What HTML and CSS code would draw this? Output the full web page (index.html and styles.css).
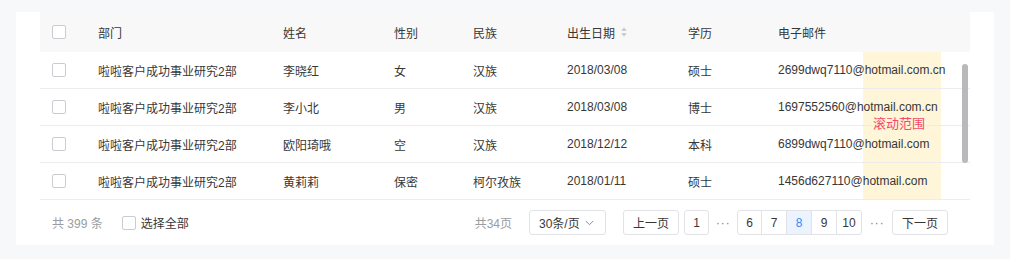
FILE: index.html
```html
<!DOCTYPE html>
<html lang="zh">
<head>
<meta charset="utf-8">
<link rel="stylesheet" href="styles.css">
</head>
<body>
<div class="card">
  <div class="table">
    <div class="row head">
      <div class="c c1"><span class="cb"></span></div>
      <div class="c">部门</div>
      <div class="c">姓名</div>
      <div class="c">性别</div>
      <div class="c">民族</div>
      <div class="c">出生日期<svg class="sort" width="6" height="10" viewBox="0 0 6 10"><path d="M3 0.5L5.8 3.8H0.2Z M3 9.5L5.8 6.2H0.2Z" fill="#c4c6cc"/></svg></div>
      <div class="c">学历</div>
      <div class="c">电子邮件</div>
    </div>
    <div class="body">
      <div class="hl"></div>
      <div class="note">滚动范围</div>
      <div class="scrollbar"></div>
      <div class="row">
        <div class="c c1"><span class="cb"></span></div>
        <div class="c">啦啦客户成功事业研究2部</div>
        <div class="c">李晓红</div>
        <div class="c">女</div>
        <div class="c">汉族</div>
        <div class="c">2018/03/08</div>
        <div class="c">硕士</div>
        <div class="c">2699dwq7110@hotmail.com.cn</div>
      </div>
      <div class="row">
        <div class="c c1"><span class="cb"></span></div>
        <div class="c">啦啦客户成功事业研究2部</div>
        <div class="c">李小北</div>
        <div class="c">男</div>
        <div class="c">汉族</div>
        <div class="c">2018/03/08</div>
        <div class="c">博士</div>
        <div class="c">1697552560@hotmail.com.cn</div>
      </div>
      <div class="row">
        <div class="c c1"><span class="cb"></span></div>
        <div class="c">啦啦客户成功事业研究2部</div>
        <div class="c">欧阳琦哦</div>
        <div class="c">空</div>
        <div class="c">汉族</div>
        <div class="c">2018/12/12</div>
        <div class="c">本科</div>
        <div class="c">6899dwq7110@hotmail.com</div>
      </div>
      <div class="row">
        <div class="c c1"><span class="cb"></span></div>
        <div class="c">啦啦客户成功事业研究2部</div>
        <div class="c">黄莉莉</div>
        <div class="c">保密</div>
        <div class="c">柯尔孜族</div>
        <div class="c">2018/01/11</div>
        <div class="c">硕士</div>
        <div class="c">1456d627110@hotmail.com</div>
      </div>
    </div>
    <div class="footer">
      <div class="left">
        <span class="total">共 399 条</span>
        <label class="selall"><span class="cb"></span>选择全部</label>
      </div>
      <div class="pager">
        <span class="pages">共34页</span>
        <span class="select">30条/页<svg width="9" height="6" viewBox="0 0 9 6"><path d="M0.8 1L4.5 4.7L8.2 1" fill="none" stroke="#8a8d93" stroke-width="1"/></svg></span>
        <span class="btn wide">上一页</span>
        <span class="btn">1</span>
        <span class="dots d1">···</span>
        <span class="group">
          <span class="gbtn">6</span><span class="gbtn">7</span><span class="gbtn active">8</span><span class="gbtn">9</span><span class="gbtn">10</span>
        </span>
        <span class="dots d2">···</span>
        <span class="btn wide">下一页</span>
      </div>
    </div>
  </div>
</div>
</body>
</html>
```
FILE: styles.css
```css
* { box-sizing: border-box; }
html, body { margin: 0; }
body {
  background: #f7f8fa;
  padding: 12px 16px 0 16px;
  font-family: "Liberation Sans", "Noto Sans CJK SC", sans-serif;
  font-size: 12px;
  color: #373737;
}
.card {
  width: 978px;
  height: 233px;
  background: #fff;
  padding: 0 24px;
}
.table { width: 930px; }
.row {
  display: grid;
  grid-template-columns: 58px 185px 111px 79px 94px 121px 90px 192px;
  height: 37px;
  border-bottom: 1px solid #ececef;
  align-items: center;
  position: relative;
}
.row.head {
  height: 40px;
  background: #f8f8f9;
  border-bottom: none;
}
.c { white-space: nowrap; display: flex; align-items: center; }
.c1 { padding-left: 12px; }
.cb {
  display: inline-block;
  width: 14px;
  height: 14px;
  border: 1px solid #c9ccd1;
  border-radius: 2px;
  background: #fff;
}
.sort { margin-left: 6px; }
.body { position: relative; }
.hl {
  position: absolute;
  left: 823px;
  top: 0;
  width: 78px;
  height: 148px;
  background: #fff5d9;
}
.note {
  position: absolute;
  left: 833px;
  top: 65px;
  font-size: 13px;
  line-height: 14px;
  color: #f5486a;
  z-index: 2;
}
.scrollbar {
  position: absolute;
  left: 922px;
  top: 12px;
  width: 6px;
  height: 99px;
  border-radius: 3px;
  background: #b9b9bb;
  z-index: 2;
}
.footer {
  height: 45px;
  display: flex;
  align-items: center;
  justify-content: space-between;
  padding: 0 22px 0 12px;
}
.left { display: flex; align-items: center; }
.total { color: #9a9ca1; }
.selall { display: flex; align-items: center; margin-left: 19px; }
.selall .cb { margin-right: 5px; }
.pager { display: flex; align-items: center; }
.pages { color: #9a9ca1; margin-right: 17px; }
.select {
  width: 77px;
  height: 25px;
  border: 1px solid #e1e3e6;
  border-radius: 3px;
  display: flex;
  align-items: center;
  padding-left: 9px;
  gap: 5px;
  margin-right: 17px;
}
.btn {
  height: 25px;
  min-width: 25px;
  border: 1px solid #e1e3e6;
  border-radius: 3px;
  display: flex;
  align-items: center;
  justify-content: center;
  margin-right: 5px;
}
.btn.wide { width: 56px; }
.pager .btn:last-child { margin-right: 0; }
.dots {
  display: flex;
  justify-content: center;
  color: #8a8d93;
  font-size: 13px;
  letter-spacing: 0.5px;
}
.d1 { width: 28px; margin-left: -5px; }
.d2 { width: 30px; }
.group {
  display: flex;
  height: 25px;
  border: 1px solid #e1e3e6;
  border-radius: 3px;
  overflow: hidden;
}
.gbtn {
  width: 25px;
  display: flex;
  align-items: center;
  justify-content: center;
  border-left: 1px solid #e1e3e6;
}
.gbtn:first-child { border-left: none; width: 23px; }
.gbtn.active { background: #eaf3fe; color: #3d8bf2; }
```
